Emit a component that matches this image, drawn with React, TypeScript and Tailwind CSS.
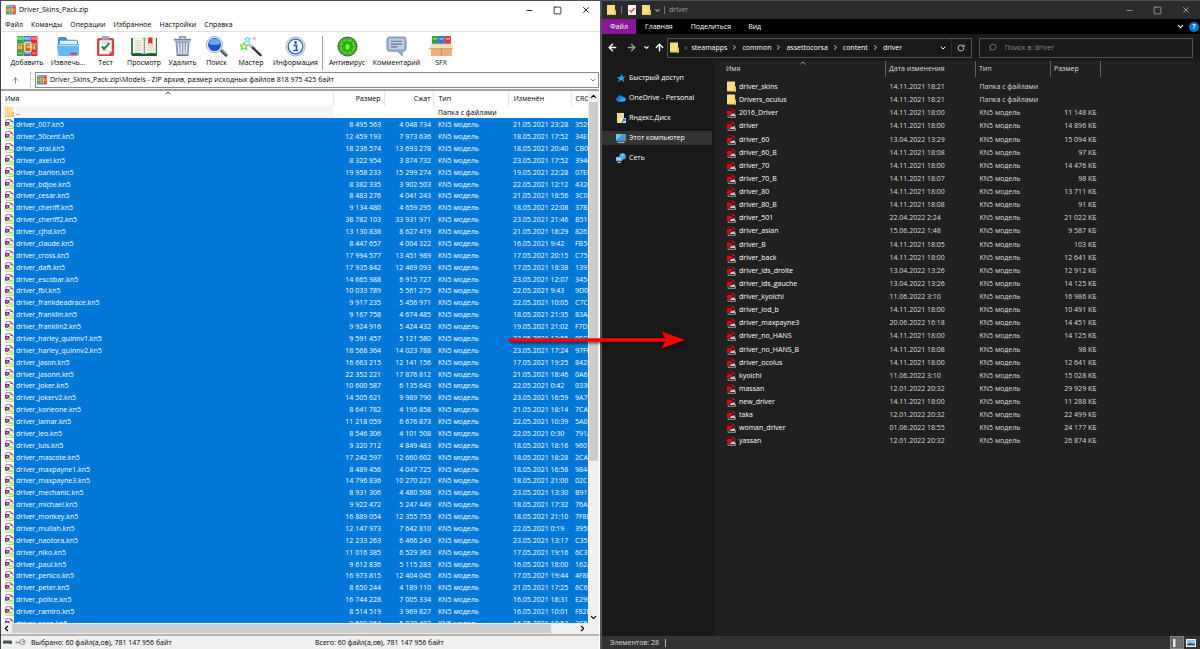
import type { ReactNode } from "react";
import clsx from "clsx";
import {
  ArrowLeft,
  ArrowRight,
  ArrowUp,
  ChevronDown,
  ChevronLeft,
  ChevronRight,
  ChevronUp,
  Minus,
  RotateCw,
  Search,
  Square,
  X,
} from "lucide-react";

type IconProps = { className?: string };

// name, size, packed, modified, crc
const archiveFiles = [
  ["007", "8 495 563", "4 048 734", "21.05.2021 23:28", "35296"],
  ["50cent", "12 459 193", "7 973 636", "18.05.2021 17:52", "34E8B"],
  ["arai", "18 236 574", "13 693 278", "18.05.2021 20:40", "CB0E1"],
  ["axel", "8 322 954", "3 874 732", "23.05.2021 17:52", "39460"],
  ["barion", "19 958 233", "15 299 274", "19.05.2021 22:28", "07EE4"],
  ["bdjoe", "8 382 335", "3 902 503", "22.05.2021 12:12", "4320A"],
  ["cesar", "8 483 276", "4 041 243", "21.05.2021 18:56", "3C0D2"],
  ["cheriff", "9 134 480", "4 659 295", "18.05.2021 22:08", "37B15"],
  ["cheriff2", "38 782 103", "33 931 971", "23.05.2021 21:46", "B5112"],
  ["cjhd", "13 130 838", "8 627 419", "21.05.2021 18:29", "8263F"],
  ["claude", "8 447 657", "4 004 322", "16.05.2021 9:42", "FB5C0"],
  ["cross", "17 994 577", "13 451 989", "17.05.2021 20:15", "C7561"],
  ["daft", "17 935 842", "12 469 093", "17.05.2021 18:38", "1397C"],
  ["escobar", "14 665 988", "6 915 727", "23.05.2021 12:07", "34542"],
  ["fbi", "10 033 789", "5 561 275", "22.05.2021 9:43", "9D0B3"],
  ["frankdeadrace", "9 917 235", "5 456 971", "22.05.2021 10:05", "C7C08"],
  ["franklin", "9 167 758", "4 674 485", "18.05.2021 21:35", "83A4D"],
  ["franklin2", "9 924 916", "5 424 432", "19.05.2021 21:02", "F7D19"],
  ["harley_quinnv1", "9 591 457", "5 121 580", "23.05.2021 12:55", "0EC70"],
  ["harley_quinnv2", "18 568 364", "14 023 788", "23.05.2021 17:24", "97F62"],
  ["jason", "16 663 215", "12 141 156", "17.05.2021 19:25", "842E0"],
  ["jasonn", "22 352 221", "17 876 812", "21.05.2021 18:46", "0A6F3"],
  ["joker", "10 600 587", "6 135 643", "22.05.2021 0:42", "03308"],
  ["jokerv2", "14 505 621", "9 989 790", "23.05.2021 16:59", "9A7B4"],
  ["korleone", "8 641 782", "4 195 858", "21.05.2021 18:14", "7CA21"],
  ["lamar", "11 218 059", "6 676 873", "22.05.2021 10:39", "5A0E5"],
  ["leo", "8 546 306", "4 101 508", "22.05.2021 0:30", "791A0"],
  ["luis", "9 320 712", "4 849 483", "18.05.2021 18:16", "9607D"],
  ["mascote", "17 242 597", "12 660 602", "18.05.2021 18:28", "2CA93"],
  ["maxpayne1", "8 489 456", "4 047 725", "18.05.2021 16:58", "9844B"],
  ["maxpayne3", "14 796 836", "10 270 221", "18.05.2021 21:00", "02C1E"],
  ["mechanic", "8 931 306", "4 480 508", "23.05.2021 13:30", "B917C"],
  ["michael", "9 922 472", "5 247 449", "18.05.2021 17:32", "76A06"],
  ["monkey", "16 889 054", "12 355 753", "18.05.2021 21:10", "7F8E2"],
  ["mullah", "12 147 973", "7 642 810", "22.05.2021 0:19", "395E1"],
  ["naotora", "12 233 263", "6 466 243", "23.05.2021 13:17", "C3590"],
  ["niko", "11 016 385", "6 529 363", "17.05.2021 19:16", "6C35F"],
  ["paul", "9 612 836", "5 115 283", "16.05.2021 18:00", "162A7"],
  ["penico", "16 973 815", "12 404 045", "17.05.2021 19:44", "4F8E0"],
  ["peter", "8 650 244", "4 189 110", "21.05.2021 17:25", "6C6D1"],
  ["police", "16 744 228", "7 005 334", "16.05.2021 18:31", "E29E8"],
  ["ramiro", "8 514 519", "3 969 827", "16.05.2021 10:01", "F82E4"],
  ["sean", "9 509 064", "5 030 482", "16.05.2021 10:53", "3C5A2"],
];

// name, date, size (folders have none)
const driverFiles = [
  ["driver_skins", "14.11.2021 18:21", ""],
  ["Drivers_oculus", "14.11.2021 18:21", ""],
  ["2016_Driver", "14.11.2021 18:00", "11 148 КБ"],
  ["driver", "14.11.2021 18:00", "14 896 КБ"],
  ["driver_60", "13.04.2022 13:29", "15 094 КБ"],
  ["driver_60_B", "14.11.2021 18:08", "97 КБ"],
  ["driver_70", "14.11.2021 18:00", "14 476 КБ"],
  ["driver_70_B", "14.11.2021 18:07", "98 КБ"],
  ["driver_80", "14.11.2021 18:00", "13 711 КБ"],
  ["driver_80_B", "14.11.2021 18:08", "91 КБ"],
  ["driver_501", "22.04.2022 2:24", "21 022 КБ"],
  ["driver_asian", "15.06.2022 1:48", "9 587 КБ"],
  ["driver_B", "14.11.2021 18:05", "103 КБ"],
  ["driver_back", "14.11.2021 18:00", "12 641 КБ"],
  ["driver_ids_droite", "13.04.2022 13:26", "12 912 КБ"],
  ["driver_ids_gauche", "13.04.2022 13:26", "14 125 КБ"],
  ["driver_kyoichi", "11.06.2022 3:10", "16 986 КБ"],
  ["driver_lod_b", "14.11.2021 18:00", "10 491 КБ"],
  ["driver_maxpayne3", "20.06.2022 16:18", "14 451 КБ"],
  ["driver_no_HANS", "14.11.2021 18:00", "14 125 КБ"],
  ["driver_no_HANS_B", "14.11.2021 18:08", "98 КБ"],
  ["driver_ocolus", "14.11.2021 18:00", "12 641 КБ"],
  ["kyoichi", "11.06.2022 3:10", "15 028 КБ"],
  ["massan", "12.01.2022 20:32", "29 929 КБ"],
  ["new_driver", "14.11.2021 18:00", "11 288 КБ"],
  ["taka", "12.01.2022 20:32", "22 499 КБ"],
  ["woman_driver", "01.06.2022 18:55", "24 177 КБ"],
  ["yassan", "12.01.2022 20:32", "26 874 КБ"],
];

const WinRarIcon = ({ className }: IconProps) => (
  <svg viewBox="0 0 22 22" className={className}>
    <rect x="0" y="0" width="7" height="21" rx="1" fill="#2faa4c" />
    <rect x="7" y="0" width="7.500" height="21" rx="1" fill="#2878d8" />
    <rect x="14.500" y="0" width="7" height="21" rx="1" fill="#df3040" />
    <path d="M0 1h7v3H0z" fill="#7be080" />
    <path d="M7.500 1h6.500v3H7.500z" fill="#79bdf5" />
    <path d="M15 1h6.500v3H15z" fill="#f58090" />
    <path d="M1 18h5M8 18h6M15.500 18h5" stroke="#e9d9a0" strokeWidth=".8" />
    <rect x="0" y="8" width="21.500" height="7" fill="#b8722c" />
    <path d="M0 8.500h21.500" stroke="#eec878" />
    <rect x="8" y="6.500" width="6.500" height="10" rx="1" fill="none" stroke="#f6dc80" strokeWidth="1.600" />
    <path d="M10 11.500h6M2 10v4M4.500 10v4M18 10v4" stroke="#ffe9a8" strokeWidth="1.300" />
  </svg>
);

const ExtractIcon = ({ className }: IconProps) => (
  <svg viewBox="0 0 24 22" className={className}>
    <path d="M1 3q0-2 2-2h6l2 3h9q2 0 2 2v12H1z" fill="#3a8fdf" />
    <path d="M3 5h18v9H3z" fill="#f7fbff" />
    <path d="M4 7h16" stroke="#9cc6ee" strokeWidth="1" strokeDasharray="1 1" />
    <path d="M0 10q0-1.500 1.500-1.500h21q1.500 0 1.500 1.500l-1 9q-.3 2-2 2H3q-1.700 0-2-2z" fill="#6db7f4" />
    <path d="M1 10h22" stroke="#b4dcfb" />
    <path d="M14 18.500h6.500" stroke="#e33824" strokeWidth="2" />
  </svg>
);

const TestIcon = ({ className }: IconProps) => (
  <svg viewBox="0 0 20 22" className={className}>
    <rect x="1" y="2" width="18" height="19" rx="2" fill="#d8434c" />
    <path d="M3.500 4.500h13V16l-3 3h-10z" fill="#f6f8f7" />
    <path d="M16.500 16h-3v3z" fill="#b5bcc0" />
    <rect x="6" y="0" width="8" height="4" rx="1" fill="#a4a9ae" />
    <path d="M6 7h8M6 15h6" stroke="#b9c5c3" />
    <path d="m6 11 2.500 2.500L14 7.500" fill="none" stroke="#257a45" strokeWidth="2" />
  </svg>
);

const ViewIcon = ({ className }: IconProps) => (
  <svg viewBox="0 0 28 22" className={className}>
    <path d="M0 2h28v18H0z" fill="#2b7b4b" />
    <path d="M2 2q6-1 12 1 6-2 12-1v16q-6-1-12 1-6-2-12-1z" fill="#f8f5e8" />
    <path d="M14 3v16" stroke="#9b9b86" strokeWidth="1.500" />
    <path d="M4 5h7M4 7.500h7M4 10h7M4 12.500h7M4 15h7M17 12.500h7M17 15h7M17 10h7" stroke="#c3c2ae" strokeWidth=".8" />
    <path d="M18 1.500h4.500V9l-2.200-2L18 9z" fill="#d8352f" />
    <path d="M1 20h26" stroke="#1d5833" strokeWidth="2" />
  </svg>
);

const DeleteIcon = ({ className }: IconProps) => (
  <svg viewBox="0 0 20 22" className={className}>
    <path d="M2.500 5h15l-1.300 16H3.800z" fill="#8a9cb5" />
    <path d="M5.500 7l.7 12M8.600 7v12M11.500 7v12M14.500 7l-.7 12" stroke="#e5edf5" strokeWidth="1.500" />
    <path d="M1 3.500h18v2.500H1z" fill="#a9b7c9" />
    <path d="M1 3.500h18M4 20.500h12" stroke="#5d6d85" />
    <path d="M7 3V1h6v2" fill="none" stroke="#7a8aa1" strokeWidth="1.500" />
  </svg>
);

const FindIcon = ({ className }: IconProps) => (
  <svg viewBox="0 0 24 22" className={className}>
    <path d="m16 14 6 6" stroke="#555b65" strokeWidth="3.500" strokeLinecap="round" />
    <path d="m16.500 13.500 5.500 5.500" stroke="#aeb4bd" strokeWidth="1" />
    <circle cx="10" cy="9" r="8.600" fill="#dce6f5" stroke="#a9b5c8" />
    <circle cx="10" cy="9" r="6.800" fill="#1f55c6" />
    <path d="M4 8a6 5 0 0 1 12 0q-6 3-12 0z" fill="#6fa6f2" />
  </svg>
);

const WizardIcon = ({ className }: IconProps) => (
  <svg viewBox="0 0 24 22" className={className}>
    <path d="m10 9 11.500 11" stroke="#34363a" strokeWidth="2.600" strokeLinecap="round" />
    <path d="m9.500 8.500 2.500 2.500" stroke="#d2d5d8" strokeWidth="2.400" strokeLinecap="round" />
    <path d="m4 7 1.300 2.300 2.700.2-1.700 2 .6 2.500L4 13l-2.700 1 .5-2.500L0 9.500l2.600-.2z" fill="#e6fcd4" stroke="#6be03a" strokeWidth="1.200" />
    <path d="m8 1 1 1.700 2 .2-1.300 1.500.4 2L8 5.500l-2 .9.400-2L5 2.900l2-.2z" fill="#d8f7fb" stroke="#3cd3ea" strokeWidth="1" />
    <circle cx="15" cy="2.500" r="1.700" fill="#f7b9b6" />
  </svg>
);

const InfoIcon = ({ className }: IconProps) => (
  <svg viewBox="0 0 22 22" className={className}>
    <circle cx="11" cy="11" r="10" fill="#e5e9ef" stroke="#a7b0be" />
    <circle cx="11" cy="11" r="7.700" fill="#f6faff" stroke="#2d63cc" strokeWidth="1.300" />
    <circle cx="11" cy="6.800" r="1.500" fill="#2457c2" />
    <path d="M9 9.800h3v5M8.700 15.200h5" fill="none" stroke="#2457c2" strokeWidth="1.800" />
  </svg>
);

const VirusIcon = ({ className }: IconProps) => (
  <svg viewBox="0 0 22 22" className={className}>
    <circle cx="11" cy="11" r="9.800" fill="#45c51b" stroke="#566056" strokeWidth="1.400" />
    <circle cx="11" cy="11" r="6.500" fill="#25b40d" stroke="#7ef24e" strokeWidth=".7" />
    <ellipse cx="11" cy="11.500" rx="2.200" ry="3.200" fill="#7df050" />
    <path d="M11 2v5M11 16v4M2.500 11h5M14.500 11h5M5.500 5.500l3.500 3.500M16.500 5.500 13 9M5.500 16.500 9 14M16.500 16.500 13 14" stroke="#1b8a0b" strokeWidth=".6" />
  </svg>
);

const CommentIcon = ({ className }: IconProps) => (
  <svg viewBox="0 0 22 22" className={className}>
    <path d="M3.500 1h15Q21 1 21 3.500v10q0 2.500-2.500 2.500H17v5l-5-5H3.500Q1 16 1 13.500v-10Q1 1 3.500 1z" fill="#93a8ca" stroke="#8698b6" />
    <rect x="3" y="3" width="16" height="11" rx="1.500" fill="#c3d2ea" />
    <path d="M5 5.500h12M5 8.500h12M5 11.500h7" stroke="#5a6f94" strokeWidth="1.300" />
  </svg>
);

const SfxIcon = ({ className }: IconProps) => (
  <svg viewBox="0 0 26 22" className={className}>
    <rect x="3" y="0" width="6.500" height="9" fill="#22a745" />
    <rect x="9.500" y="0" width="7" height="9" fill="#2779dd" />
    <rect x="16.500" y="0" width="6.500" height="9" fill="#e23a45" />
    <path d="M4 3h4.500M11 3h4M18 3h4" stroke="#f0c74a" strokeWidth="1.300" />
    <path d="M2 11h22v10H2z" fill="#e9b07c" />
    <path d="M3 8h20l3 5H0z" fill="#f8dcb4" />
    <path d="M0 13.200h26" stroke="#cf9258" strokeWidth=".8" />
    <path d="M13 13v8" stroke="#c98e58" />
  </svg>
);

const FolderIcon = ({ className }: IconProps) => (
  <svg viewBox="0 0 9 10" className={className}>
    <path d="M0 0h8v9.500H0z" fill="#fbdc84" />
    <path d="M7 5h2v5H7z" fill="#efc45e" />
    <path d="M0 9.500h9" stroke="#eabf5c" />
  </svg>
);

const ModelIcon = ({ className, dark }: IconProps & { dark?: boolean }) => (
  <svg viewBox="0 0 9 10" className={className}>
    {dark ? (
      <>
        <path d="M1 3V.7h5L8 2.700V5" fill="none" stroke="#8a1018" strokeWidth=".8" />
        <path d="M5.500.5 8 3H5.500z" fill="#f0101c" />
        <path d="M0 3h5v2L3 7H0z" fill="#e3000b" />
        <path d="M2.500 8 5 5.500l1 .7L7 4.500 8.800 8z" fill="#c9c9c9" />
        <path d="M1 7.500v1.800h7.500V8" fill="none" stroke="#b9b9b9" strokeWidth=".8" />
      </>
    ) : (
      <>
        <path d="M1 3V.7h5L8 2.700V5" fill="#fff" stroke="#8d5a92" strokeWidth=".8" />
        <path d="M5.500.5 8 3H5.500z" fill="#6f3c80" />
        <path d="M0 3h4.500v2.200L3 6.800H0z" fill="#80305c" />
        <path d="M1.200 4.800h2" stroke="#f5e9f2" strokeWidth=".8" />
        <path d="M2.500 8 5 5.500l1 .7L7 4.500 8.800 8z" fill="#b2e67c" />
        <path d="M1 7.500v1.800h7.500V8" fill="none" stroke="#8be03a" strokeWidth=".9" />
      </>
    )}
  </svg>
);

// thin caret at the top edge of the sorted column
const SortMark = ({ className }: IconProps) => (
  <svg viewBox="0 0 8 4" className={className}>
    <path d="m1.500 3.200 2.500-2.200 2.500 2.200" fill="none" stroke="currentColor" strokeWidth=".9" />
  </svg>
);

const StarIcon = ({ className }: IconProps) => (
  <svg viewBox="0 0 10 10" className={className}>
    <path d="m6 .8.600 2.900 3.200-.3-2.500 2.200.9 3.600L5.400 7 1.700 9.200l1.600-3L.5 4.600l3.400-.5z" fill="#2b9cf0" />
  </svg>
);

const CloudIcon = ({ className }: IconProps) => (
  <svg viewBox="0 0 10 10" className={className}>
    <path d="M2 8.500A2 2 0 0 1 1.500 4.600 3 3 0 0 1 7 3.800a2.400 2.400 0 0 1 .8 4.700z" fill="#0f7fd6" />
    <path d="M2 8.500 6.500 5a2 2 0 0 1 3.200 2 2 2 0 0 1-1.700 1.500z" fill="#29a9ee" />
  </svg>
);

const YandexIcon = ({ className }: IconProps) => (
  <svg viewBox="0 0 10 10" className={className}>
    <path d="M1 0h7v10H1z" fill="#fbdc84" />
    <path d="M4.500 5H10v5H4.500z" fill="#f5f8fc" />
    <path d="M5.500 9.500 9 6M6.500 6H9v2.500" fill="none" stroke="#1b74d8" strokeWidth="1.200" />
  </svg>
);

const ComputerIcon = ({ className }: IconProps) => (
  <svg viewBox="0 0 10 10" className={className}>
    <path d="M0 1h10v6.500H0z" fill="#6cc7f7" />
    <path d="M0 7.500 6 1h4v6.500z" fill="#3b9fe4" />
    <path d="M1.500 9.300h7" stroke="#b8c7d2" strokeWidth="1.200" />
  </svg>
);

const NetworkIcon = ({ className }: IconProps) => (
  <svg viewBox="0 0 10 10" className={className}>
    <circle cx="6.500" cy="3.500" r="3.300" fill="#3aa5e8" />
    <path d="M4.500 2q2-1.500 4 0M6.500.5v5" stroke="#a4dcfa" strokeWidth=".7" fill="none" />
    <path d="M0 4h6v4H0z" fill="#8ed5fa" stroke="#1d6fae" strokeWidth=".5" />
    <path d="M1.500 9.300h3.500" stroke="#c9d6df" />
  </svg>
);

const tools = [
  { label: "Добавить", icon: <WinRarIcon className="h-full" />, width: "w-[42px]" },
  { label: "Извлечь...", icon: <ExtractIcon className="h-full" />, width: "w-10" },
  { label: "Тест", icon: <TestIcon className="h-full" />, width: "w-[35px]" },
  { label: "Просмотр", icon: <ViewIcon className="h-full" />, width: "w-[42px]" },
  { label: "Удалить", icon: <DeleteIcon className="h-full" />, width: "w-[35px]" },
  { label: "Поиск", icon: <FindIcon className="h-full" />, width: "w-[33px]" },
  { label: "Мастер", icon: <WizardIcon className="h-full" />, width: "w-9" },
  { label: "Информация", icon: <InfoIcon className="h-full" />, width: "w-[53px]" },
];

const extraTools = [
  { label: "Антивирус", icon: <VirusIcon className="h-full" />, width: "w-11" },
  { label: "Комментарий", icon: <CommentIcon className="h-full" />, width: "w-[55px]" },
  { label: "SFX", icon: <SfxIcon className="h-full" />, width: "w-[34px]" },
];

const places = [
  { label: "Быстрый доступ", icon: <StarIcon className="size-[10px]" /> },
  { label: "OneDrive - Personal", icon: <CloudIcon className="size-[10px]" /> },
  { label: "Яндекс.Диск", icon: <YandexIcon className="size-[10px]" /> },
  { label: "Этот компьютер", icon: <ComputerIcon className="size-[10px]" />, active: true },
  { label: "Сеть", icon: <NetworkIcon className="size-[10px]" /> },
];

const ToolButton = ({ label, icon, width }: { label: string; icon: ReactNode; width: string }) => (
  <button type="button" className={clsx("flex shrink-0 flex-col items-center", width)}>
    <span className="h-[21px]">{icon}</span>
    <span className="leading-[12px]">{label}</span>
  </button>
);

const WindowButtons = ({ className }: IconProps) => (
  <div className={clsx("ml-auto flex items-center gap-[19px]", className)}>
    <button type="button" aria-label="Свернуть">
      <Minus className="size-[9px]" strokeWidth={2} />
    </button>
    <button type="button" aria-label="Развернуть">
      <Square className="size-[9px]" strokeWidth={2} />
    </button>
    <button type="button" aria-label="Закрыть">
      <X className="size-[10px]" strokeWidth={2} />
    </button>
  </div>
);

const ArchiveTable = () => (
  <table className="w-full table-fixed border-collapse leading-[11px] whitespace-nowrap">
    <colgroup>
      <col className="w-[13px]" />
      <col />
      <col className="w-[51px]" />
      <col className="w-[49px]" />
      <col className="w-[75px]" />
      <col className="w-[63px]" />
      <col className="w-[17px]" />
    </colgroup>
    <thead>
      <tr className="h-[15px] text-left [&>th]:p-0 [&>th]:font-normal">
        <th colSpan={2}>
          <div className="pl-1">Имя</div>
        </th>
        <th className="border-l border-[#e5e5e5]">
          <div className="pr-[3px] text-right">Размер</div>
        </th>
        <th className="border-l border-[#e5e5e5]">
          <div className="pr-[2px] text-right">Сжат</div>
        </th>
        <th className="border-l border-[#e5e5e5]">
          <div className="pl-[5px]">Тип</div>
        </th>
        <th className="border-l border-[#e5e5e5]">
          <div className="pl-[5px]">Изменён</div>
        </th>
        <th className="overflow-hidden border-l border-[#e5e5e5]">
          <div className="pl-1">CRC32</div>
        </th>
      </tr>
    </thead>
    <tbody>
      <tr className="h-3 [&>td]:p-0">
        <td className="bg-[#f6f6f6]">
          <FolderIcon className="ml-1 block h-[10px] w-[9px]" />
        </td>
        <td className="bg-[#f6f6f6] pl-[2px]!">..</td>
        <td />
        <td />
        <td className="pl-[5px]!">Папка с файлами</td>
        <td />
        <td />
      </tr>
      {archiveFiles.map(([name, size, packed, modified, crc]) => (
        <tr key={name} className="h-3 nth-[8n]:h-[11px] [&>td]:p-0">
          <td>
            <ModelIcon className="ml-1 block h-[10px] w-[9px]" />
          </td>
          <td className="bg-[#0078d7] pl-[2px]! text-white">{`driver_${name}.kn5`}</td>
          <td className="bg-[#0078d7] pr-[3px]! text-right text-white">{size}</td>
          <td className="bg-[#0078d7] pr-[2px]! text-right text-white">{packed}</td>
          <td className="bg-[#0078d7] pl-[5px]! text-white">KN5 модель</td>
          <td className="bg-[#0078d7] pl-[5px]! text-white">{modified}</td>
          <td className="overflow-hidden bg-[#0078d7] pl-1! text-white">{crc}</td>
        </tr>
      ))}
    </tbody>
  </table>
);

const ArchiveWindow = () => (
  <section className="mr-px flex min-w-0 flex-1 flex-col border-l border-[#3f4354] bg-white text-black">
    <header className="flex h-[18px] shrink-0 items-center gap-[3px] pr-2 pl-[5px]">
      <WinRarIcon className="size-[10px]" />
      <h1>Driver_Skins_Pack.zip</h1>
      <WindowButtons />
    </header>

    <nav className="flex h-3 shrink-0 items-center gap-2 pl-1">
      <button type="button">Файл</button>
      <button type="button">Команды</button>
      <button type="button">Операции</button>
      <button type="button">Избранное</button>
      <button type="button">Настройки</button>
      <button type="button">Справка</button>
    </nav>

    <div className="flex h-[41px] shrink-0 border-t border-[#e0e0e0] pt-1 pl-[5px]">
      {tools.map((tool) => (
        <ToolButton key={tool.label} {...tool} />
      ))}
      <div className="mr-[2px] h-[34px] w-px bg-[#a0a0a0]" />
      {extraTools.map((tool) => (
        <ToolButton key={tool.label} {...tool} />
      ))}
    </div>

    <div className="flex h-[17px] shrink-0 items-stretch pb-px">
      <button type="button" aria-label="Вверх" className="flex w-[30px] items-center justify-center border-r border-dotted border-[#a0a0a0] text-[#606060]">
        <ArrowUp className="size-[9px]" />
      </button>
      <label className="ml-1 flex flex-1 items-center gap-[3px] border border-[#8a8a8a] pr-px pl-px">
        <WinRarIcon className="size-[10px]" />
        <select aria-label="Путь" className="min-w-0 flex-1 appearance-none bg-transparent outline-none">
          <option>Driver_Skins_Pack.zip\Models - ZIP архив, размер исходных файлов 818 975 425 байт</option>
        </select>
        <ChevronDown className="size-2 text-[#404040]" />
      </label>
    </div>

    <div className="flex min-h-0 flex-1 border-t-2 border-[#a0a0a0]">
      <div className="relative min-w-0 flex-1 overflow-hidden">
        <ArchiveTable />
        <SortMark className="absolute top-0 left-[163px] h-1 w-2 text-[#404040]" />
      </div>
      <div className="flex w-[11px] flex-col items-center bg-[#f0f0f0]">
        <ChevronUp className="my-px size-[9px] shrink-0" strokeWidth={3} />
        <div className="w-[9px] flex-[360] bg-[#cdcdcd]" />
        <div className="flex-[151]" />
        <ChevronDown className="my-px size-[9px] shrink-0" strokeWidth={3} />
      </div>
    </div>

    <div className="flex h-[11px] shrink-0 items-center bg-[#f0f0f0] pr-[11px]">
      <ChevronLeft className="mx-px size-[9px]" strokeWidth={3} />
      <div className="h-[9px] flex-[541] bg-[#cdcdcd]" />
      <div className="flex-[26]" />
      <ChevronRight className="mx-px size-[9px]" strokeWidth={3} />
    </div>

    <footer className="flex h-[15px] shrink-0 items-center border-t-2 border-[#b4b4b4] bg-[#f0f0f0] pl-[2px]">
      <svg viewBox="0 0 24 9" className="h-[9px] w-6">
        <rect x="0" y="2.500" width="9" height="3.500" rx="1" fill="#4b5560" />
        <path d="M1 5.500h5" stroke="#6dc08b" />
        <path d="M12 3.500h5l2 .5v1.500h-6z" fill="#a5a5a5" />
        <circle cx="19.500" cy="4" r="2.700" fill="#e2e2e2" stroke="#888" strokeWidth=".8" />
        <circle cx="20.500" cy="3.500" r=".8" fill="#666" />
      </svg>
      <span className="flex-1 pl-1">Выбрано: 60 файл(а,ов), 781 147 956 байт</span>
      <span className="flex-1">Всего: 60 файл(а,ов), 781 147 956 байт</span>
    </footer>
  </section>
);

const crumbs = ["steamapps", "common", "assettocorsa", "content", "driver"];

const ExplorerTable = () => (
  <table className="w-[387px] table-fixed border-collapse leading-[12px] whitespace-nowrap">
    <colgroup>
      <col className="w-6" />
      <col />
      <col className="w-[90px]" />
      <col className="w-[75px]" />
      <col className="w-[50px]" />
    </colgroup>
    <thead>
      <tr className="h-4 text-left text-[#dedede] [&>th]:border-r [&>th]:border-[#636363] [&>th]:p-0 [&>th]:font-normal">
        <th colSpan={2}>
          <div className="pl-3">Имя</div>
        </th>
        <th>
          <div className="pl-[3px]">Дата изменения</div>
        </th>
        <th>
          <div className="pl-[3px]">Тип</div>
        </th>
        <th>
          <div className="pl-[3px]">Размер</div>
        </th>
      </tr>
      <tr className="h-[3px]" />
    </thead>
    <tbody>
      {driverFiles.map(([name, date, size]) => (
        <tr key={name} className="h-[13px] nth-[8n+4]:h-[14px] [&>td]:p-0">
          <td>
            {size ? (
              <ModelIcon dark className="ml-[13px] block h-[10px] w-[9px]" />
            ) : (
              <FolderIcon className="ml-[13px] block h-[11px] w-[9px]" />
            )}
          </td>
          <td className="pl-px! text-white">{name}</td>
          <td className="pl-1! text-[#dedede]">{date}</td>
          <td className="pl-1! text-[#dedede]">{size ? "KN5 модель" : "Папка с файлами"}</td>
          <td className="pr-1! text-right text-[#dedede]">{size}</td>
        </tr>
      ))}
    </tbody>
  </table>
);

const ExplorerWindow = () => (
  <section className="flex min-w-0 flex-1 flex-col border-l-2 border-[#50555e] bg-[#191919] text-white">
    <header className="flex h-[18px] shrink-0 items-center bg-[#2b2b2b] pr-[9px] pl-[5px] text-[#a0a0a0]">
      <FolderIcon className="h-[10px] w-[9px]" />
      <span className="mx-[5px] h-2 w-px bg-[#777]" />
      <svg viewBox="0 0 8 10" className="mx-px h-[10px] w-2">
        <path d="M0 0h8v10H0z" fill="#f4f4f4" />
        <path d="m1.500 5 1.800 2L6.500 3" fill="none" stroke="#d1502c" strokeWidth="1.300" />
      </svg>
      <FolderIcon className="ml-[5px] h-[10px] w-[9px]" />
      <ChevronDown className="mr-[3px] ml-[3px] size-[7px]" strokeWidth={4} />
      <span className="mr-1 h-2 w-px bg-[#777]" />
      <h2>driver</h2>
      <WindowButtons className="text-[#b0b0b0]" />
    </header>

    <nav className="flex h-[15px] shrink-0 items-stretch bg-black pr-px">
      <button type="button" className="w-[34px] bg-[#881798]">
        Файл
      </button>
      <button type="button" className="px-[9px]">
        Главная
      </button>
      <button type="button" className="px-[9px]">
        Поделиться
      </button>
      <button type="button" className="px-2">
        Вид
      </button>
      <span className="ml-auto flex items-center gap-1">
        <ChevronDown className="size-[9px]" strokeWidth={3} />
        <button type="button" aria-label="Справка" className="flex size-[10px] items-center justify-center rounded-full bg-[#0078d7] font-bold">
          ?
        </button>
      </span>
    </nav>

    <div className="flex h-[27px] shrink-0 items-center pr-[7px] pl-[5px]">
      <button type="button" aria-label="Назад">
        <ArrowLeft className="size-[11px]" strokeWidth={3} />
      </button>
      <button type="button" aria-label="Вперёд" className="ml-2 text-[#9a9a9a]">
        <ArrowRight className="size-[11px]" strokeWidth={3} />
      </button>
      <button type="button" aria-label="Последние расположения" className="ml-[6px]">
        <ChevronDown className="size-[7px]" strokeWidth={4} />
      </button>
      <button type="button" aria-label="Вверх" className="ml-1">
        <ArrowUp className="size-[11px]" strokeWidth={3} />
      </button>
      <div className="ml-[2px] flex h-5 flex-[300] items-center border border-[#535353] pl-[2px]">
        <FolderIcon className="h-[11px] w-[9px]" />
        <span className="mr-1 ml-[5px] text-[#888]">«</span>
        <div className="flex items-center">
          {crumbs.map((crumb, i) => (
            <span key={crumb} className="flex items-center">
              {i > 0 && <ChevronRight className="mx-1 size-[7px]" strokeWidth={3} />}
              <a href="#">{crumb}</a>
            </span>
          ))}
        </div>
        <ChevronDown className="mr-1 ml-auto size-2" strokeWidth={3} />
        <button type="button" aria-label="Обновить" className="flex h-full w-5 items-center justify-center border-l border-[#2c2c2c] text-[#b8b8b8]">
          <RotateCw className="size-2" strokeWidth={3} />
        </button>
      </div>
      <label className="ml-[7px] flex h-5 flex-[204] items-center gap-2 border border-[#535353] pl-2 text-[#8a8a8a]">
        <Search className="size-[9px] -scale-x-100" />
        <input type="search" aria-label="Поиск" placeholder="Поиск в: driver" className="min-w-0 flex-1 bg-transparent outline-none placeholder:text-[#8a8a8a]" />
      </label>
    </div>

    <div className="flex min-h-0 flex-1">
      <nav className="flex w-[112px] shrink-0 flex-col gap-[6px] pt-[10px]">
        {places.map((place) => (
          <a
            key={place.label}
            href="#"
            className={clsx("mr-[2px] flex h-[14px] items-center gap-[3px] pl-[14px]", place.active && "bg-[#333333]")}
          >
            {place.icon}
            {place.label}
          </a>
        ))}
      </nav>
      <div className="relative min-w-0 flex-1 overflow-hidden bg-[#202020]">
        <ExplorerTable />
        <SortMark className="absolute top-0 left-[85px] h-1 w-2 text-[#b0b0b0]" />
      </div>
    </div>

    <footer className="flex h-[13px] shrink-0 items-center bg-[#333333] pl-2 text-[#dedede]">
      <span>Элементов: 28</span>
      <span className="ml-[6px] h-2 w-px bg-[#bdbdbd]" />
      <button type="button" aria-label="Таблица" className="mr-[2px] ml-auto flex h-full w-[14px] items-center justify-center border border-[#838383] bg-[#666666]">
        <svg viewBox="0 0 9 8" className="h-2 w-[9px]">
          <path d="M0 0h2.500v8H0z" fill="#e6e6e6" />
          <path d="M4 1.500h5M4 4h5M4 6.500h5" stroke="#7a7a7a" />
        </svg>
      </button>
      <button type="button" aria-label="Значки" className="mr-[4px]">
        <svg viewBox="0 0 10 8" className="h-2 w-[10px]">
          <path d="M0 0h10v8H0z" fill="#f0f5fa" />
          <path d="M1 1h8v4H1z" fill="#8fc3f2" />
          <path d="M1 5 4 4l5 1v1.500H1z" fill="#2f5a62" />
        </svg>
      </button>
    </footer>
  </section>
);

const App = () => {
  return (
    <main className="relative flex h-screen overflow-hidden bg-white pt-px font-['Open_Sans','Noto_Sans',sans-serif] text-[7px] leading-[12px] before:absolute before:inset-x-0 before:top-0 before:h-px before:bg-[#4b4d58]">
      <ArchiveWindow />
      <ExplorerWindow />

      {/* the arrow runs from the archive over to the game folder */}
      <svg viewBox="0 0 180 24" className="pointer-events-none absolute top-[328px] left-1/2 -ml-[92px] h-6 w-[180px] drop-shadow-[1px_2px_1px_rgba(0,0,0,0.5)]">
        <path d="M2.500 12H160" stroke="#fe0000" strokeWidth="3.600" strokeLinecap="round" />
        <path d="M177 12 153.500 3.500 158 12l-4.500 8.500z" fill="#fe0000" />
      </svg>
    </main>
  );
};

export default App;
